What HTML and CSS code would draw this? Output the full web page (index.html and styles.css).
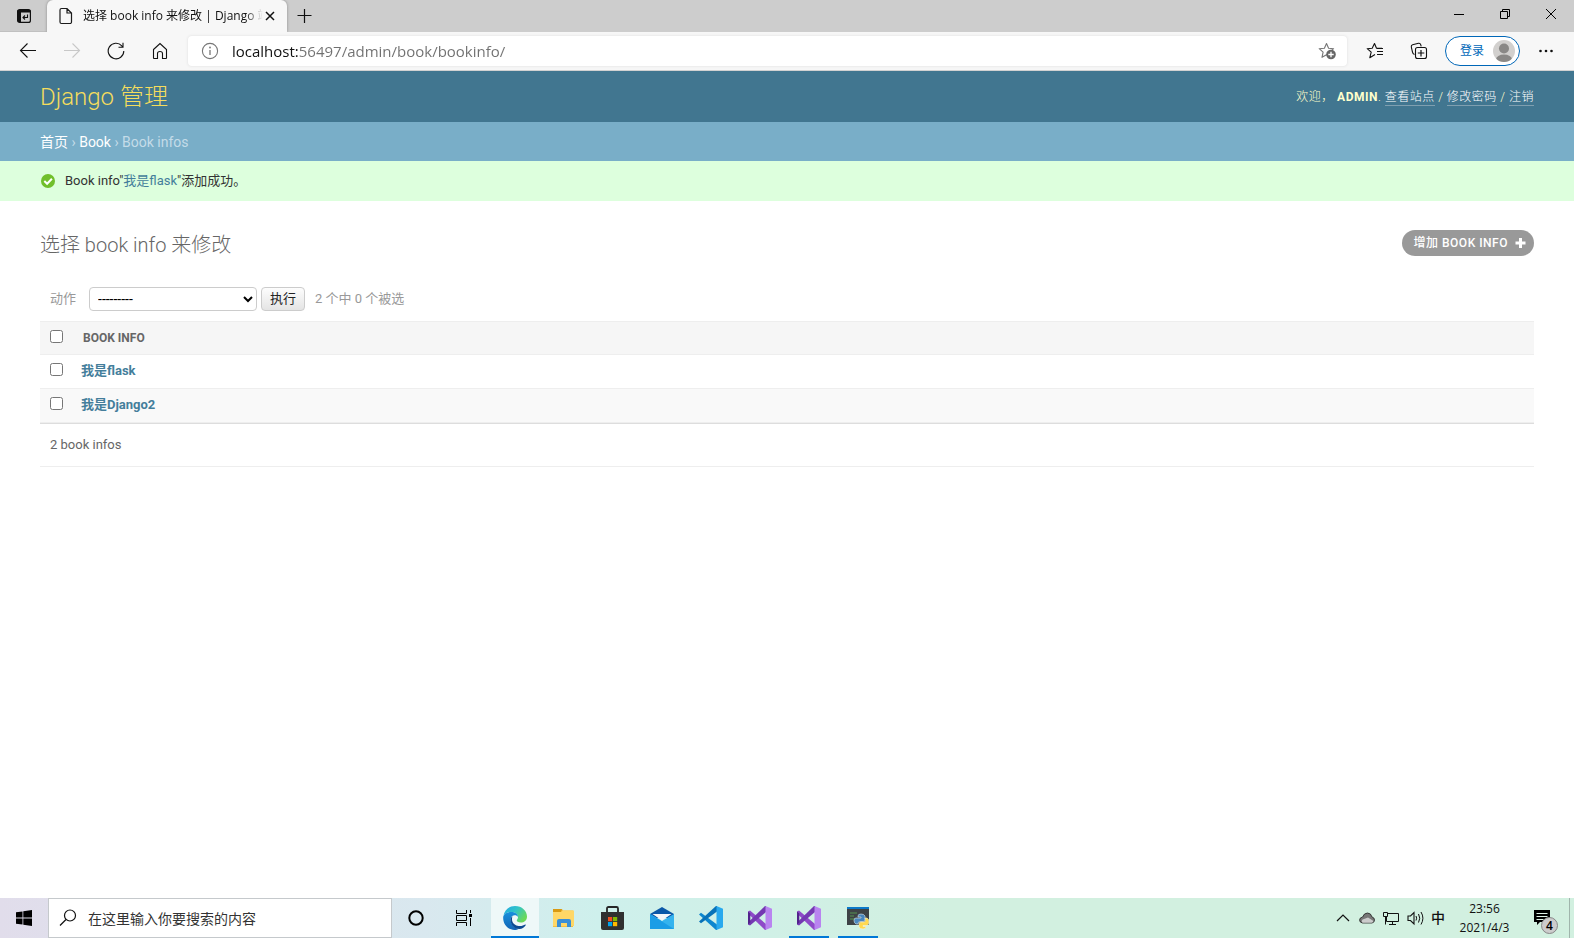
FILE: index.html
```html
<!DOCTYPE html>
<html lang="zh-CN">
<head>
<meta charset="utf-8">
<title>选择 book info 来修改 | Django 站点管理员</title>
<link rel="stylesheet" href="styles.css">
</head>
<body>
<div class="tabstrip">
  <button class="tab-actions" aria-label="标签操作"><svg width="16" height="16" viewBox="0 0 16 16"><rect x="1.6" y="1.6" width="12.8" height="12.8" rx="2" fill="none" stroke="#111" stroke-width="1.2"/><path d="M1.5 2h13v2.500H5V14H2z" fill="#111"/><path d="M11.500 6.500v3H7.500M9 7.500L7 9.500l2 2" fill="none" stroke="#111" stroke-width="1.100"/></svg></button>
  <div class="tab">
    <svg width="14" height="18" viewBox="0 0 14 18"><path d="M2.500 1.500H8L12.500 6v9a1.500 1.500 0 0 1-1.500 1.500H2.500A1.500 1.500 0 0 1 1 15V3a1.500 1.500 0 0 1 1.500-1.500zM8 1.500V6h4.500" fill="none" stroke="#1b1b1b" stroke-width="1.200"/></svg>
    <span class="tab-title">选择 book info 来修改 | Django 站</span>
    <button class="tab-close" aria-label="关闭标签"><svg width="10" height="10" viewBox="0 0 10 10"><path d="M1 1l8 8M9 1L1 9" stroke="#111" stroke-width="1.500"/></svg></button>
  </div>
  <button class="new-tab" aria-label="新建标签"><svg width="16" height="16" viewBox="0 0 16 16"><path d="M7.500 1v14M.500 7.500h14" stroke="#111" stroke-width="1.200"/></svg></button>
  <div class="window-controls">
    <button aria-label="最小化"><svg width="12" height="12" viewBox="0 0 12 12"><path d="M1 6.500h10" stroke="#000"/></svg></button>
    <button aria-label="还原"><svg width="12" height="12" viewBox="0 0 12 12"><path d="M1.500 3.500h7v7h-7zM3.500 3.500v-2h7v7h-2" fill="none" stroke="#000"/></svg></button>
    <button aria-label="关闭"><svg width="12" height="12" viewBox="0 0 12 12"><path d="M1 1l10 10M11 1L1 11" stroke="#000"/></svg></button>
  </div>
</div>

<div class="toolbar">
  <button class="nav-btn" aria-label="后退"><svg width="18" height="16" viewBox="0 0 18 16"><path d="M17 7.500H1.500M8.500.500L1.500 7.500l7 7" fill="none" stroke="#111" stroke-width="1.100"/></svg></button>
  <button class="nav-btn" aria-label="前进"><svg width="18" height="16" viewBox="0 0 18 16"><path d="M1 7.500h15.500M9.500.500l7 7-7 7" fill="none" stroke="#c8c8c8" stroke-width="1.100"/></svg></button>
  <button class="nav-btn" aria-label="刷新"><svg width="18" height="18" viewBox="0 0 18 18"><path d="M16.800 9A7.800 7.800 0 1 1 14.800 3.800L16 5M16 .8V5.300H11.500" fill="none" stroke="#111" stroke-width="1.100"/></svg></button>
  <button class="nav-btn" aria-label="主页"><svg width="16" height="18" viewBox="0 0 16 18"><path d="M1.500 7.500L8 1.500l6.500 6v8.500q0 .5-.5.5H10.500v-5q0-2-2.500-2t-2.500 2v5H2q-.5 0-.5-.5z" fill="none" stroke="#111" stroke-width="1.100"/></svg></button>
  <div class="address">
    <svg width="18" height="18" viewBox="0 0 18 18"><circle cx="9" cy="9" r="7.600" fill="none" stroke="#767676" stroke-width="1.100"/><path d="M9 8v5" stroke="#767676" stroke-width="1.300"/><circle cx="9" cy="5.500" r=".9" fill="#767676"/></svg>
    <input class="url" type="text" aria-label="地址" value="localhost:56497/admin/book/bookinfo/">
    <button aria-label="收藏此页"><svg width="18" height="18" viewBox="0 0 18 18"><path d="M8.500 1.500l2.100 4.700 5 .5-3.800 3.500 1 5.100-4.300-2.600-4.500 2.600 1.100-5.100L1.200 6.700l5.200-.5z" fill="none" stroke="#767676" stroke-width="1.100" stroke-linejoin="round"/><circle cx="13" cy="12.500" r="4.800" fill="#666"/><path d="M13 9.800v5.400M10.300 12.500h5.400" stroke="#fff" stroke-width="1.300"/></svg></button>
  </div>
  <button class="nav-btn" aria-label="收藏夹"><svg width="18" height="18" viewBox="0 0 18 18"><path d="M9 12.500l-5.200 3.200 1.400-5.500L1.200 6.700l5-.5 2.300-4.700 2 4.700H16" fill="none" stroke="#111" stroke-width="1.100" stroke-linejoin="round"/><path d="M11 9.500h6M11 12.500h6M11 6.500h6" stroke="#111" stroke-width="1.100"/></svg></button>
  <button class="nav-btn" aria-label="集锦"><svg width="18" height="18" viewBox="0 0 18 18"><path d="M4.500 12.500Q2.800 12 2.500 10.200L1.300 5Q1 3.300 2.600 2.800L8.500 1.300q1.700-.3 2.200 1.300l.5 1.800" fill="none" stroke="#111" stroke-width="1.100"/><rect x="5.500" y="5.500" width="11" height="11" rx="2" fill="none" stroke="#111" stroke-width="1.100"/><path d="M11 8v6.500M7.800 11h6.500" stroke="#111" stroke-width="1.200"/></svg></button>
  <button class="login">登录<svg width="22" height="22" viewBox="0 0 22 22"><defs><clipPath id="face"><circle cx="11" cy="11" r="11"/></clipPath></defs><g clip-path="url(#face)"><path d="M0 0h22v22H0z" fill="#d2d0ce"/><circle cx="11" cy="8.500" r="5" fill="#8a8886"/><ellipse cx="11" cy="19.500" rx="8" ry="5" fill="#8a8886"/></g></svg></button>
  <button class="nav-btn more" aria-label="更多"><svg width="16" height="4" viewBox="0 0 16 4"><g fill="#111"><circle cx="2.500" cy="2" r="1.300"/><circle cx="8" cy="2" r="1.300"/><circle cx="13.500" cy="2" r="1.300"/></g></svg></button>
</div>

<main class="page">
  <header class="site-header">
    <a class="brand" href="#">Django 管理</a>
    <div class="user-tools">欢迎，&nbsp;<strong>ADMIN</strong>. <a href="#">查看站点</a> / <a href="#">修改密码</a> / <a href="#">注销</a></div>
  </header>
  <nav class="breadcrumbs"><a href="#">首页</a> › <a href="#">Book</a> › Book infos</nav>
  <div class="message"><svg width="14" height="14" viewBox="0 0 14 14"><circle cx="7" cy="7" r="7" fill="#70bf2b"/><path d="M3.300 7l2.800 2.800 4.800-5" fill="none" stroke="#fff" stroke-width="2"/></svg><span>Book info"<a href="#">我是flask</a>"添加成功。</span></div>
  <section class="content">
    <div class="title-row">
      <h1>选择 book info 来修改</h1>
      <a class="add" href="#">增加 BOOK INFO<svg width="12" height="12" viewBox="0 0 12 12"><path d="M6.500 1v10M1.500 6h10" stroke="#fff" stroke-width="3"/></svg></a>
    </div>
    <form class="actions">
      <label for="action">动作</label>
      <select id="action"><option>---------</option></select>
      <button type="button">执行</button>
      <span>2 个中 0 个被选</span>
    </form>
    <table class="results">
      <thead><tr><th class="check"><input type="checkbox" aria-label="全选"></th><th class="name">BOOK INFO</th></tr></thead>
      <tbody>
        <tr><td class="check"><input type="checkbox" aria-label="我是flask"></td><td><a href="#">我是flask</a></td></tr>
        <tr><td class="check"><input type="checkbox" aria-label="我是Django2"></td><td><a href="#">我是Django2</a></td></tr>
      </tbody>
    </table>
    <p class="paginator">2 book infos</p>
  </section>
</main>

<footer class="taskbar">
  <button class="slot" aria-label="开始"><svg width="16" height="16" viewBox="0 0 16 16"><path d="M0 2.300L6.500 1.400v6.200H0zM7.300 1.200L16 0v7.600H7.300zM0 8.400h6.500v6.200L0 13.700zM7.300 8.400H16V16l-8.700-1.200z"/></svg></button>
  <label class="search"><svg width="18" height="18" viewBox="0 0 18 18"><circle cx="11" cy="6.500" r="5.500" fill="none" stroke="#111" stroke-width="1.200"/><path d="M7 10.500L1 16.500" stroke="#111" stroke-width="1.300"/></svg><input type="text" aria-label="搜索" placeholder="在这里输入你要搜索的内容"></label>
  <button class="slot" aria-label="Cortana"><svg width="16" height="16" viewBox="0 0 16 16"><circle cx="8" cy="8" r="6.700" fill="none" stroke="#000" stroke-width="2"/></svg></button>
  <button class="slot" aria-label="任务视图"><svg width="18" height="16" viewBox="0 0 18 16"><path d="M1.500 0v3.500h10V0M1.500 16v-3.500h10V16M1.500 5.500h10v5h-10zM15.500 0v3M15.500 8v8" fill="none" stroke="#000"/><path d="M14 4h3v3h-3z"/></svg></button>
  <div class="apps">
    <button class="slot active" aria-label="Microsoft Edge"><svg width="24" height="24" viewBox="0 0 24 24"><defs><linearGradient id="e1" x1="0" y1="0" x2="1" y2=".6"><stop offset="0" stop-color="#1fa5e4"/><stop offset=".5" stop-color="#31c4c8"/><stop offset="1" stop-color="#6bd957"/></linearGradient><linearGradient id="e2" x1="0" y1="0" x2="0" y2="1"><stop offset="0" stop-color="#1890dc"/><stop offset="1" stop-color="#1264b5"/></linearGradient></defs><path d="M.4 10C1.500 3.800 6.300 0 12 0c7 0 12 5 12 10.500 0 4-3 6-6.200 6-3 0-4.200-1.200-4-2.200.2-.8 1.200-1.300 1.200-3.200C15 8.300 12 6 8.500 6 4.500 6 1.500 8 .4 10z" fill="url(#e1)"/><path d="M.3 10.200C1.500 7.500 4.800 6 8.300 6c3.600 0 6.600 2 6.700 4.800-1-1.300-2.300-1.800-3.700-1.500C8 10 7 12.700 8 16c1.200 4 4.500 6.500 8 6.800-1.300.8-2.700 1.200-4.500 1.200C5 24-.8 18 .3 10.200z" fill="url(#e2)"/><path d="M9.500 10.300c-1.500 3.700 0 8.900 6 9.700 2.800.4 5-.4 6.700-1.400.5-.2.800.2.500.6-1.500 2.300-3.700 3.600-6.200 3.800-4.300.2-8-3.200-8.900-7.500-.5-2.300.2-4.200 1.900-5.200z" fill="#0c4a92"/></svg></button>
    <button class="slot" aria-label="文件资源管理器"><svg width="24" height="24" viewBox="0 0 24 24"><path d="M1 3h9l1 1.500h10V21H1z" fill="#f5bd43"/><path d="M1 3h9l-1 3H1z" fill="#d99a12"/><path d="M1 6h8l2-1.500h11V20H1z" fill="#ffd766"/><path d="M5 21v-6q0-2 2-2h10q2 0 2 2v6h-4v-4H9v4z" fill="#3a8fd6"/></svg></button>
    <button class="slot" aria-label="Microsoft Store"><svg width="24" height="24" viewBox="0 0 24 24"><path d="M6 7V2.500q0-1.500 1.500-1.500h8q1.500 0 1.500 1.500V7" fill="none" stroke="#262626" stroke-width="1.800"/><path d="M0 6h23v16q0 2-2 2H2q-2 0-2-2z" fill="#303030"/><path d="M7 11h4.200v4.200H7z" fill="#f25022"/><path d="M12 11h4.200v4.200H12z" fill="#7fba00"/><path d="M7 16h4.200v4.200H7z" fill="#00a4ef"/><path d="M12 16h4.200v4.200H12z" fill="#ffb900"/></svg></button>
    <button class="slot" aria-label="邮件"><svg width="24" height="24" viewBox="0 0 24 24"><path d="M0 8L12 1l12 7v4H0z" fill="#0b58a8"/><path d="M0 8l12 7 12-7v15H0z" fill="#35b3ee"/><path d="M0 8l24 15H0z" fill="#1b9de6"/><path d="M2.500 8h19L12 14.500z" fill="#f5f7f9"/></svg></button>
    <button class="slot" aria-label="Visual Studio Code"><svg width="24" height="24" viewBox="0 0 24 24"><path d="M0 8.500l2-1.700L18 18.500V24h-1z" fill="#0d86cf"/><path d="M0 15.500l2 1.700L18 5.500V0h-1z" fill="#0872b8"/><path d="M17.500 0L24 2.800v18.400L17.500 24z" fill="#29a9ee"/></svg></button>
    <button class="slot" aria-label="Visual Studio"><svg width="24" height="24" viewBox="0 0 24 24"><path d="M0 5.500L2 4.500 18 18v6h-1L0 7.500z" fill="#8e4ac8"/><path d="M0 18.500l2 1L18 6V0h-1L0 16.500z" fill="#7438b2"/><path d="M0 5.500v13l2.300-2V7.500z" fill="#52218c"/><path d="M17.500 0L24 2.800v18.400L17.500 24z" fill="#b984f0"/></svg></button>
    <button class="slot running" aria-label="Visual Studio"><svg width="24" height="24" viewBox="0 0 24 24"><path d="M0 5.500L2 4.500 18 18v6h-1L0 7.500z" fill="#8e4ac8"/><path d="M0 18.500l2 1L18 6V0h-1L0 16.500z" fill="#7438b2"/><path d="M0 5.500v13l2.300-2V7.500z" fill="#52218c"/><path d="M17.500 0L24 2.800v18.400L17.500 24z" fill="#b984f0"/></svg></button>
    <button class="slot running" aria-label="Python"><svg width="24" height="24" viewBox="0 0 24 24"><path d="M1 1h22v18H1z" fill="#3e4246"/><path d="M1 1h22v2H1z" fill="#0c79c9"/><path d="M4 7h7M4 10h4M4 13h5" stroke="#4d7a4d" stroke-width="1.500"/><path d="M12 10q0-2 3-2t4 2v4q0 1.500-2 1.500h-3q-2 0-2 2.500h-2q-2-1-2-3.500T10 12h5v-1h-3z" fill="#4a86bd" stroke="#dceaf2" stroke-width=".6"/><path d="M19 12h2q2 1 2 4t-2 3.500h-4v1h3q0 2.500-3 2.500t-4-2v-3q0-2 2-2h3q1.500 0 1.500-2z" fill="#ffd94f" stroke="#f3f1d6" stroke-width=".6"/></svg></button>
  </div>
  <div class="tray">
    <svg width="16" height="16" viewBox="0 0 16 16"><path d="M2 11l6-6 6 6" fill="none" stroke="#111" stroke-width="1.200"/></svg>
    <svg width="16" height="16" viewBox="0 0 16 16"><path d="M3.500 13Q.6 12.500.6 10t3-3Q5 3 8.500 3T13 7q2.500.5 2.500 3T13 13z" fill="#777" stroke="#222" stroke-width=".8"/><path d="M3.500 12.700Q1.500 10 5 9l4-1.500L14.500 11q-.5 1.700-2 1.700z" fill="#ccc"/></svg>
    <svg width="16" height="16" viewBox="0 0 16 16"><path d="M5 3.500h10.500v8H3.500V7M9.500 11.500v3M6 14.500h7M.5 2.500h4v4h-4zM2.500 6.500v8" fill="none" stroke="#111"/></svg>
    <svg width="18" height="16" viewBox="0 0 18 16"><path d="M1 6v4.500h2.500L7 14V2.500L3.500 6z" fill="none" stroke="#111" stroke-width="1.100"/><path d="M9 6q1.300 2.200 0 4.500M11.500 4q2.500 4.200 0 8.500M14 2q3.800 6.200 0 12.500" fill="none" stroke="#111"/></svg>
    <span class="ime">中</span>
  </div>
  <div class="clock"><time>23:56</time><time>2021/4/3</time></div>
  <button class="notify" aria-label="4 条通知"><svg width="18" height="18" viewBox="0 0 18 18"><path d="M1 1h16v12H7l-3 3v-3H1z"/><path d="M3.500 4.500h11M3.500 7.500h11M3.500 10.500h7" stroke="#dff3e8" stroke-width="1"/></svg><span>4</span></button>
  <div class="show-desktop"></div>
</footer>
</body>
</html>
```
FILE: styles.css
```css
* { box-sizing: border-box; }
html, body { height: 100%; margin: 0; }
body {
  display: flex;
  flex-direction: column;
  background: #fff;
  color: #333;
  font: 13px/20px Roboto, "Noto Sans CJK SC", sans-serif;
  overflow: hidden;
}
button { margin: 0; padding: 0; border: 0; background: none; font: inherit; }
svg { display: block; flex: none; }
a { color: #447e9b; text-decoration: none; }

.tabstrip, .toolbar, .taskbar { display: flex; flex: none; font-family: "Open Sans", "Noto Sans CJK SC", sans-serif; }
.tabstrip { height: 32px; background: #cdcdcd; align-items: stretch; }
.tabstrip button { display: flex; align-items: center; justify-content: center; }
.tab-actions { width: 47px; border-bottom: 1px solid #c0c0c0; }
.tab {
  display: flex;
  align-items: center;
  width: 240px;
  padding: 0 12px;
  background: #f7f7f7;
  border-radius: 6px 6px 0 0;
  box-shadow: 0 0 3px #888;
  clip-path: inset(0 -4px);
  color: #111;
  font-size: 12px;
}
.tab-title {
  flex: 1;
  min-width: 0;
  margin: 0 2px 0 10px;
  overflow: hidden;
  white-space: nowrap;
  mask-image: linear-gradient(to right, #000 90%, transparent);
}
.new-tab { width: 36px; }
.window-controls { display: flex; margin-left: auto; }
.window-controls button { width: 46px; padding-bottom: 4px; }

.toolbar {
  height: 39px;
  padding: 0 6px;
  align-items: center;
  background: #f7f7f7;
  border-bottom: 1px solid #d2d2d2;
}
.nav-btn { display: flex; justify-content: center; align-items: center; width: 44px; height: 30px; }
.address {
  display: flex;
  flex: 1;
  align-items: center;
  height: 30px;
  margin: 0 6px;
  padding: 0 11px 0 13px;
  background: #fff;
  border-radius: 4px;
  box-shadow: 0 0 3px #ddd;
}
.url {
  flex: 1;
  margin: 0 13px;
  padding: 0;
  border: 0;
  outline: 0;
  font: 15px/24px "Open Sans", sans-serif;
  color: transparent;
  background: linear-gradient(to right, #111 66px, #707070 66px);
  background-clip: text;
}
.login {
  display: flex;
  align-items: center;
  justify-content: space-between;
  width: 75px;
  height: 30px;
  margin-left: 4px;
  padding: 0 4px 0 14px;
  border: 1px solid #0067b8;
  border-radius: 15px;
  background: #fff;
  color: #0067b8;
  font-size: 12px;
}
.more { margin-left: 4px; }

.page { flex: 1; min-height: 0; }
.site-header {
  display: flex;
  align-items: center;
  justify-content: space-between;
  height: 51px;
  padding: 0 40px;
  background: #417690;
  color: #ffc;
}
.brand { color: #f5dd5d; font-size: 24px; font-weight: 300; line-height: 30px; }
.user-tools { padding-top: 2px; font-size: 12px; font-weight: 300; line-height: 16px; letter-spacing: 0.5px; }
.user-tools strong { font-weight: 700; }
.user-tools a { display: inline-block; color: #fff; border-bottom: 1px solid #7f9fb0; }
.breadcrumbs { padding: 10px 40px 9px; background: #79aec8; color: #c4dce8; font-size: 14px; }
.breadcrumbs a { color: #fff; }
.message {
  display: flex;
  align-items: center;
  gap: 10px;
  height: 40px;
  padding: 0 41px;
  background: #dfd;
}
.content { padding: 29px 40px; }
.title-row { display: flex; align-items: flex-start; justify-content: space-between; height: 57px; }
h1 { margin: 0; color: #666; font-size: 20px; font-weight: 300; line-height: 30px; }
.add {
  display: flex;
  align-items: center;
  gap: 6px;
  height: 26px;
  padding: 0 8px 0 12px;
  border-radius: 13px;
  background: #999;
  color: #fff;
  font-size: 12px;
  font-weight: 500;
  letter-spacing: 0.5px;
}
.actions { display: flex; align-items: center; height: 24px; padding-left: 10px; margin-bottom: 10px; color: #999; }
.actions select {
  width: 168px;
  height: 24px;
  margin: 0 4px 0 13px;
  padding: 0 4px;
  border: 1px solid #ccc;
  border-radius: 4px;
  background: #fff;
  color: #000;
  font: 14px Roboto, sans-serif;
}
.actions button {
  width: 44px;
  height: 24px;
  margin-right: 10px;
  border: 1px solid #ccc;
  border-radius: 4px;
  background: linear-gradient(#fdfdfd, #e4e4e4);
  color: #222;
}
.results { width: 100%; border-collapse: separate; border-spacing: 0; text-align: left; }
.results th, .results td { height: 34px; padding: 0 0 2px; border-bottom: 1px solid #eee; line-height: 16px; }
.results th { padding: 0; border-top: 1px solid #eee; background: #f6f6f6; color: #666; font-size: 12px; font-weight: 700; }
.results .name { padding-left: 2px; }
.results .check { width: 41px; padding: 0 0 2px 10px; }
.results input { display: block; width: 13px; height: 13px; margin: 0 0 2px; }
.results a { font-weight: 700; }
.results tbody tr:nth-child(even) td { background: #f9f9f9; }
.paginator { margin: 0; padding: 11px 10px; border-top: 1px solid #ddd; border-bottom: 1px solid #eee; color: #666; }

.taskbar {
  height: 40px;
  color: #111;
  background: linear-gradient(to right, #e1ddeb 0, #d9e8ef 27%, #cef0ec 38%, #d2f0e0 60%, #d2f0e0);
}
.slot { display: flex; flex: none; align-items: center; justify-content: center; width: 48px; }
.search {
  display: flex;
  align-items: center;
  width: 344px;
  padding-left: 10px;
  gap: 11px;
  border: 1px solid #c5c9cc;
  background: #fff;
}
.search input { flex: 1; min-width: 0; padding: 0; border: 0; outline: 0; font: 14px/24px "Noto Sans CJK SC", sans-serif; }
.search input::placeholder { color: #333; opacity: 1; }
.apps { display: flex; gap: 1px; margin-left: 3px; }
.active { background: #eef8f8; box-shadow: inset 0 -2px #0078d7; }
.running { background: linear-gradient(#0078d7, #0078d7) bottom / 40px 2px no-repeat; }
.tray { display: flex; align-items: center; gap: 8px; margin-left: auto; }
.ime { margin-left: -2px; font-size: 14px; font-weight: 500; }
.clock { display: flex; flex-direction: column; justify-content: center; width: 79px; text-align: center; font-size: 12px; line-height: 19px; }
.notify { position: relative; display: flex; align-items: center; justify-content: center; width: 45px; padding-right: 9px; }
.notify span {
  position: absolute;
  left: 17px;
  top: 19px;
  width: 17px;
  height: 17px;
  border: 1px solid #888;
  border-radius: 50%;
  background: #ccc;
  font-size: 12px;
  font-weight: 600;
  line-height: 15px;
}
.show-desktop { width: 5px; border-left: 1px solid #a0b5ac; }
```
